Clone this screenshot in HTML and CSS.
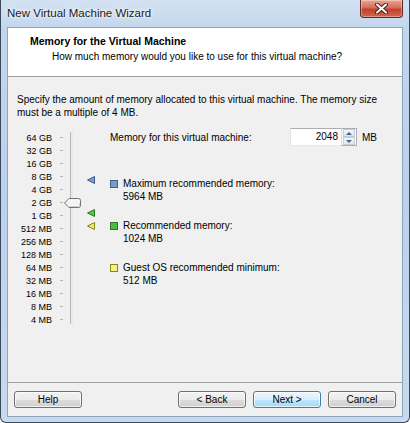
FILE: index.html
```html
<!DOCTYPE html>
<html>
<!-- Header Section -->
<head>
  <meta charset="utf-8">
  <!-- CSS Style Section -->
  <link rel="stylesheet" href="styles.css">
</head>
<!-- Wizard Window Section -->
<body>
  <div class="window">
    <div class="titlebar">
      <span class="title-text">New Virtual Machine Wizard</span>
      <div class="close-button">
        <svg width="13" height="11" viewBox="0 0 13 11">
          <path d="M2 1.5 L11 9.5 M11 1.5 L2 9.5" stroke="#4a2020" stroke-width="4" stroke-linecap="round"/>
          <path d="M2 1.5 L11 9.5 M11 1.5 L2 9.5" stroke="#ffffff" stroke-width="2" stroke-linecap="round"/>
        </svg>
      </div>
    </div>
    <div class="client">
      <!-- Page Header -->
      <div class="header">
        <h1>Memory for the Virtual Machine</h1>
        <p>How much memory would you like to use for this virtual machine?</p>
      </div>
      <!-- Page Content -->
      <div class="content">
        <p class="intro">Specify the amount of memory allocated to this virtual machine. The memory size must be a multiple of 4 MB.</p>
        <div class="memory-panel">
          <div class="scale">
            <div class="scale-row"><span class="scale-label">64 GB</span><span class="tick"></span></div>
            <div class="scale-row"><span class="scale-label">32 GB</span><span class="tick"></span></div>
            <div class="scale-row"><span class="scale-label">16 GB</span><span class="tick"></span></div>
            <div class="scale-row"><span class="scale-label">8 GB</span><span class="tick"></span></div>
            <div class="scale-row"><span class="scale-label">4 GB</span><span class="tick"></span></div>
            <div class="scale-row"><span class="scale-label">2 GB</span><span class="tick"></span></div>
            <div class="scale-row"><span class="scale-label">1 GB</span><span class="tick"></span></div>
            <div class="scale-row"><span class="scale-label">512 MB</span><span class="tick"></span></div>
            <div class="scale-row"><span class="scale-label">256 MB</span><span class="tick"></span></div>
            <div class="scale-row"><span class="scale-label">128 MB</span><span class="tick"></span></div>
            <div class="scale-row"><span class="scale-label">64 MB</span><span class="tick"></span></div>
            <div class="scale-row"><span class="scale-label">32 MB</span><span class="tick"></span></div>
            <div class="scale-row"><span class="scale-label">16 MB</span><span class="tick"></span></div>
            <div class="scale-row"><span class="scale-label">8 MB</span><span class="tick"></span></div>
            <div class="scale-row"><span class="scale-label">4 MB</span><span class="tick"></span></div>
            <div class="track"></div>
            <!-- Markers: top = row center for log2(64 GB / value) -->
            <svg class="thumb" style="top: 70px;" width="17" height="10" viewBox="0 0 17 10">
              <path d="M0.5 5 L5 0.5 H14.5 Q16.5 0.5 16.5 2.5 V7.5 Q16.5 9.5 14.5 9.5 H5 Z" fill="#f4f4f4" stroke="#707070"/>
              <path d="M5.5 8.5 H14.5 Q15.5 8.5 15.5 7.5 V5" fill="none" stroke="#d0d0d0"/>
            </svg>
            <svg class="marker" style="top: 48px;" width="8" height="8" viewBox="0 0 8 8">
              <path d="M0.5 4 L7.5 0.5 V7.5 Z" fill="#7e9cc6" stroke="#3a5b8c"/>
            </svg>
            <svg class="marker" style="top: 81px;" width="8" height="8" viewBox="0 0 8 8">
              <path d="M0.5 4 L7.5 0.5 V7.5 Z" fill="#5cc24e" stroke="#2c7a22"/>
            </svg>
            <svg class="marker" style="top: 94px;" width="8" height="8" viewBox="0 0 8 8">
              <path d="M0.5 4 L7.5 0.5 V7.5 Z" fill="#f2ec5c" stroke="#8a8420"/>
            </svg>
          </div>
          <div class="settings">
            <div class="memory-row">
              <label class="memory-label">Memory for this virtual machine:</label>
              <div class="memory-input">2048</div>
              <div class="spinner">
                <div class="spin-button"><span class="spin-up"></span></div>
                <div class="spin-button"><span class="spin-down"></span></div>
              </div>
              <span class="unit">MB</span>
            </div>
            <div class="legend">
              <div class="legend-item">
                <span class="swatch swatch-blue"></span>
                <div class="legend-text">Maximum recommended memory:<br>5964 MB</div>
              </div>
              <div class="legend-item">
                <span class="swatch swatch-green"></span>
                <div class="legend-text">Recommended memory:<br>1024 MB</div>
              </div>
              <div class="legend-item">
                <span class="swatch swatch-yellow"></span>
                <div class="legend-text">Guest OS recommended minimum:<br>512 MB</div>
              </div>
            </div>
          </div>
        </div>
      </div>
      <!-- Button Bar -->
      <div class="button-bar">
        <input type="button" value="Help" class="button">
        <div class="spacer"></div>
        <input type="button" value="< Back" class="button">
        <input type="button" value="Next >" class="button button-default">
        <input type="button" value="Cancel" class="button">
      </div>
    </div>
  </div>
</body>
</html>
```

FILE: styles.css
```css
/* Main Element Styles */
html, body {
  margin: 0;
  padding: 0;
  width: 410px;
  height: 423px;
  overflow: hidden;
  font-family: "Liberation Sans", Arial, sans-serif;
  font-size: 10px;
  color: #000;
}
p, h1 {
  margin: 0;
}

/* Window Frame Styles */
.window {
  box-sizing: border-box;
  height: 423px;
  display: flex;
  flex-direction: column;
  padding: 0 6px 5px 6px;
  border: 1px solid #3b4a5c;
  border-top: none;
  border-radius: 0 0 6px 6px;
  background: linear-gradient(to bottom, #d3e2f2 0px, #c2d6ec 30px, #bcd1ea 200px, #c7daef 423px);
}
.titlebar {
  height: 27px;
  display: flex;
  align-items: flex-start;
}
.title-text {
  margin-top: 7px;
  font-size: 11.5px;
  color: #1a1a1a;
  text-shadow: 0 0 6px #ffffff, 0 0 3px #ffffff;
}
.close-button {
  margin-left: auto;
  width: 43px;
  height: 18px;
  box-sizing: border-box;
  border: 1px solid #5a2a26;
  border-top: none;
  border-radius: 0 0 4px 4px;
  background: linear-gradient(to bottom, #e9a493 0%, #d56e58 45%, #c1412b 55%, #d0664c 100%);
  box-shadow: inset 0 0 0 1px rgba(255, 255, 255, 0.35);
  display: flex;
  align-items: center;
  justify-content: center;
}

/* Client Area Styles */
.client {
  flex: 1;
  display: flex;
  flex-direction: column;
  border: 1px solid #8ea3bd;
  background-color: #f0f0f0;
}
.header {
  height: 41px;
  padding: 7px 0 0 22px;
  background-color: #ffffff;
  border-bottom: 1px solid #a0a0a0;
}
.header h1 {
  font-size: 10.5px;
  font-weight: bold;
  line-height: 13px;
}
.header p {
  margin-top: 2px;
  padding-left: 22px;
  line-height: 13px;
}
.content {
  flex: 1;
  padding: 16px 0 0 9px;
}
.intro {
  line-height: 13px;
  width: 378px;
}

/* Memory Panel Styles */
.memory-panel {
  display: flex;
  margin-top: 9px;
}
.scale {
  position: relative;
  width: 93px;
  padding-top: 3px;
}
.scale-row {
  height: 13px;
  display: flex;
  align-items: center;
}
.scale-label {
  width: 35px;
  text-align: right;
  font-size: 9px;
}
.tick {
  margin-left: 8px;
  width: 3px;
  height: 1px;
  background-color: #b4b4b4;
}
.track {
  position: absolute;
  left: 53px;
  top: 4px;
  width: 2px;
  height: 192px;
  background-color: #e7eaea;
  border-left: 1px solid #b8b8b8;
}
.thumb {
  position: absolute;
  left: 47px;
}
.marker {
  position: absolute;
  left: 70px;
}
.settings {
  flex: 1;
}
.memory-row {
  display: flex;
  align-items: center;
  height: 18px;
}
.memory-label {
  width: 180px;
}
.memory-input {
  box-sizing: border-box;
  width: 51px;
  height: 18px;
  padding: 2px 3px 0 0;
  text-align: right;
  background-color: #ffffff;
  border: 1px solid #abadb3;
  border-bottom-color: #e3e9ef;
  border-left-color: #e2e3ea;
  border-right: none;
}
.spinner {
  display: flex;
  flex-direction: column;
  width: 16px;
  height: 18px;
  box-sizing: border-box;
  border: 1px solid #abadb3;
  border-left-color: #dcdcdc;
  background-color: #ffffff;
}
.spin-button {
  flex: 1;
  margin: 0 1px;
  display: flex;
  align-items: center;
  justify-content: center;
  background: linear-gradient(to bottom, #f3f6fa, #dfe6ee);
  border: 1px solid #c3cdd9;
}
.spin-up {
  border-left: 3px solid transparent;
  border-right: 3px solid transparent;
  border-bottom: 3px solid #4d6185;
}
.spin-down {
  border-left: 3px solid transparent;
  border-right: 3px solid transparent;
  border-top: 3px solid #4d6185;
}
.unit {
  margin-left: 5px;
}

/* Legend Styles */
.legend {
  margin-top: 31px;
  display: flex;
  flex-direction: column;
  gap: 16px;
}
.legend-item {
  display: flex;
  align-items: flex-start;
}
.legend-text {
  line-height: 13px;
  margin-left: 5px;
}
.swatch {
  width: 6px;
  height: 6px;
  margin-top: 3px;
  border: 1px solid;
}
.swatch-blue {
  background-color: #7b9cc9;
  border-color: #3f5f8c;
}
.swatch-green {
  background-color: #4cbd43;
  border-color: #2a7a23;
}
.swatch-yellow {
  background-color: #f7f27a;
  border-color: #8a8420;
}

/* Button Styles */
.button-bar {
  display: flex;
  gap: 7px;
  padding: 8px 6px 8px 6px;
  border-top: 1px solid #a0a0a0;
}
.spacer {
  flex: 1;
}
.button {
  width: 68px;
  height: 17px;
  padding: 0;
  font-family: "Liberation Sans", Arial, sans-serif;
  font-size: 10px;
  color: #000;
  border: 1px solid #707070;
  border-radius: 3px;
  background: linear-gradient(to bottom, #f2f2f2 0%, #ebebeb 50%, #dddddd 51%, #cfcfcf 100%);
  box-shadow: inset 0 0 0 1px rgba(255, 255, 255, 0.7);
}
.button-default {
  border-color: #3c7fb1;
  background: linear-gradient(to bottom, #eaf6fd 0%, #d9f0fc 50%, #bee6fd 51%, #a7d9f5 100%);
}
```
